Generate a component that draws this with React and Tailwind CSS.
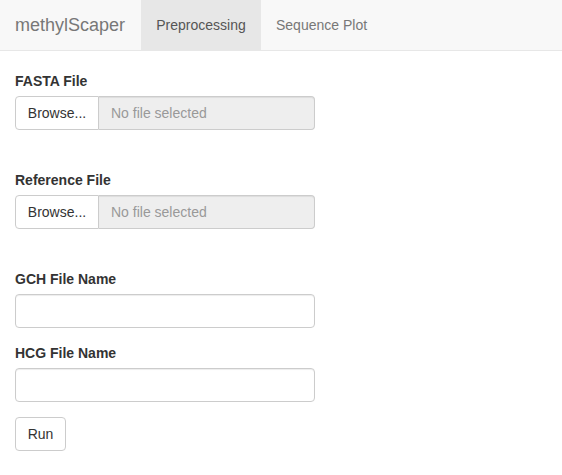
export default function App() {
  const font = { fontFamily: '"Liberation Sans", Arial, sans-serif' };

  const FileField = ({ label }) => (
    <div className="mb-[15px]">
      <label className="block mb-[5px] font-bold leading-[20px]">{label}</label>
      <div className="flex w-[300px] h-[34px]">
        <button className="w-[84px] bg-white border border-[#ccc] rounded-l-[4px] text-[#333] leading-[20px]">
          Browse...
        </button>
        <div className="flex-1 flex items-center px-[12px] bg-[#eee] border border-l-0 border-[#ccc] rounded-r-[4px] text-[#999] shadow-[inset_0_1px_1px_rgba(0,0,0,0.075)]">
          No file selected
        </div>
      </div>
      <div className="mt-[5px] h-[20px] invisible" />
    </div>
  );

  const TextField = ({ label }) => (
    <div className="mb-[15px]">
      <label className="block mb-[5px] font-bold leading-[20px]">{label}</label>
      <input
        type="text"
        className="block w-[300px] h-[34px] px-[12px] bg-white border border-[#ccc] rounded-[4px] shadow-[inset_0_1px_1px_rgba(0,0,0,0.075)] outline-none"
      />
    </div>
  );

  return (
    <div className="min-h-screen bg-white text-[14px] text-[#333] leading-[20px]" style={font}>
      {/* Navbar */}
      <nav className="flex h-[51px] bg-[#f8f8f8] border-b border-[#e7e7e7]">
        <span className="w-[141px] px-[15px] py-[15px] text-[18px] leading-[20px] text-[#777]">
          methylScaper
        </span>
        <span className="w-[120px] text-center py-[15px] bg-[#e7e7e7] text-[#555]">Preprocessing</span>
        <span className="px-[15px] py-[15px] text-[#777]">Sequence Plot</span>
      </nav>

      <div className="px-[15px] pt-[20px]">
        <FileField label="FASTA File" />
        <FileField label="Reference File" />
        <TextField label="GCH File Name" />
        <TextField label="HCG File Name" />
        <button className="w-[51px] h-[34px] bg-white border border-[#ccc] rounded-[4px] text-[#333]">
          Run
        </button>
      </div>
    </div>
  );
}
